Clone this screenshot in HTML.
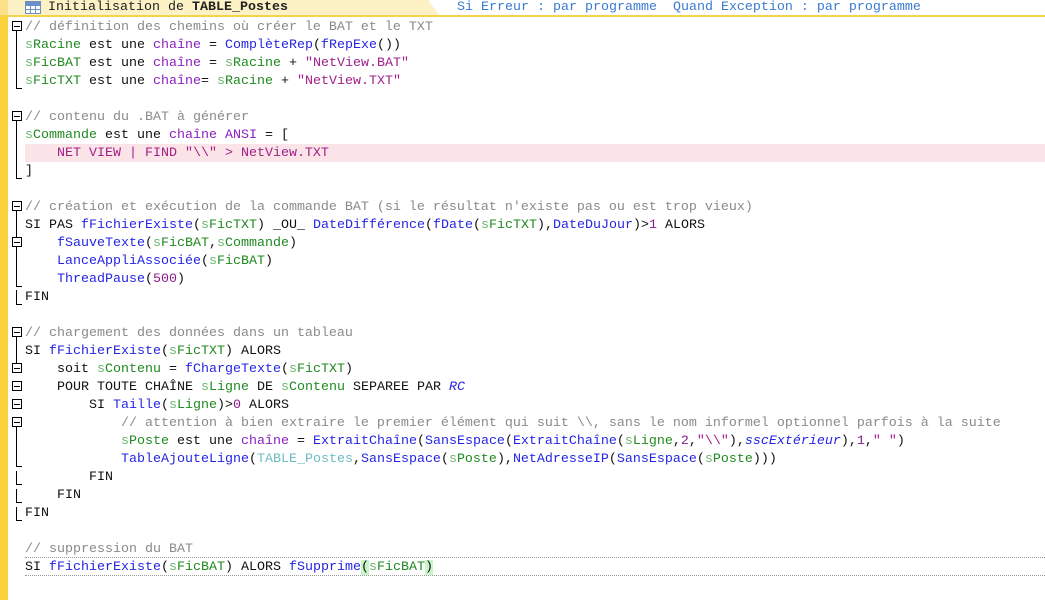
<!DOCTYPE html>
<html><head><meta charset="utf-8"><style>
body{margin:0;width:1045px;height:600px;overflow:hidden;background:#fff;position:relative;font-family:"Liberation Mono",monospace;font-size:13.33px}
#bar{position:absolute;left:0;top:0;width:8px;height:600px;background:#fcd23c}
#hdr{position:absolute;left:0;top:0}
.t{position:absolute;left:48px;top:0;height:16px;line-height:16px;color:#222;white-space:pre}
.e{position:absolute;left:457px;top:0;line-height:15px;color:#3a7ad0;white-space:pre}
#code{position:absolute;left:25px;top:19px}
.l{height:18px;line-height:18px;white-space:pre;color:#111}
.c{color:#8a8a8a}.v{color:#6fb46f}.w{color:#1f8a1f}.f{color:#2424e6}.k{color:#111}.ty{color:#8a1fc0}.s{color:#a0208a}.n{color:#8a1a8a}.i{color:#2424e6;font-style:italic}.tb{color:#6cbcc0}
.pink{position:absolute;left:25px;top:144px;width:1020px;height:18px;background:#fbe4e7}
.dot{position:absolute;left:25px;width:1020px;border-top:1px dotted #999}
.hl{background:#c8f5c8}
</style></head><body>
<div id="bar"></div>
<svg id="hdr" width="1045" height="17">
<polygon points="8,0 428,0 440,16 8,16" fill="#fdf1c6"/>
<rect x="0" y="0" width="8" height="16" fill="#fde08a"/>
<rect x="0" y="15" width="1045" height="2" fill="#f6d34c"/>
<g fill="#fff" stroke="#6b8fc9" stroke-width="1">
<rect x="25.5" y="1.5" width="15" height="12"/>
<line x1="25.5" y1="5.5" x2="40.5" y2="5.5"/><line x1="25.5" y1="9.5" x2="40.5" y2="9.5"/>
<line x1="30.5" y1="1.5" x2="30.5" y2="13.5"/><line x1="35.5" y1="1.5" x2="35.5" y2="13.5"/>
</g>
<rect x="25" y="1" width="16" height="4" fill="#6b8fc9"/>
</svg>
<div class="t">Initialisation de <b>TABLE_Postes</b></div>
<div class="e">Si Erreur : par programme  Quand Exception : par programme</div>
<div class="pink"></div>
<div class="dot" style="top:557px"></div>
<div class="dot" style="top:575px"></div>
<svg style="position:absolute;left:0;top:0" width="30" height="600" fill="none" stroke="#000" stroke-width="1">
<g fill="#fff">
<rect x="12.5" y="21.5" width="9" height="9"/>
<rect x="12.5" y="111.5" width="9" height="9"/>
<rect x="12.5" y="201.5" width="9" height="9"/>
<rect x="12.5" y="237.5" width="9" height="9"/>
<rect x="12.5" y="327.5" width="9" height="9"/>
<rect x="12.5" y="363.5" width="9" height="9"/>
<rect x="12.5" y="381.5" width="9" height="9"/>
<rect x="12.5" y="399.5" width="9" height="9"/>
<rect x="12.5" y="417.5" width="9" height="9"/>
</g>
<line x1="14" y1="26.5" x2="20" y2="26.5"/><line x1="14" y1="116.5" x2="20" y2="116.5"/>
<line x1="14" y1="206.5" x2="20" y2="206.5"/><line x1="14" y1="242.5" x2="20" y2="242.5"/>
<line x1="14" y1="332.5" x2="20" y2="332.5"/><line x1="14" y1="368.5" x2="20" y2="368.5"/>
<line x1="14" y1="386.5" x2="20" y2="386.5"/><line x1="14" y1="404.5" x2="20" y2="404.5"/>
<line x1="14" y1="422.5" x2="20" y2="422.5"/>
<polyline points="16.5,31 16.5,88.5 22,88.5"/>
<polyline points="16.5,121 16.5,178.5 22,178.5"/>
<line x1="16.5" y1="211" x2="16.5" y2="237"/>
<polyline points="16.5,247 16.5,286.5 22,286.5"/>
<polyline points="16.5,290 16.5,304.5 22,304.5"/>
<line x1="16.5" y1="337" x2="16.5" y2="363"/>
<polyline points="16.5,427 16.5,466.5 22,466.5"/>
<polyline points="16.5,471 16.5,484.5 22,484.5"/>
<polyline points="16.5,489 16.5,502.5 22,502.5"/>
<polyline points="16.5,507 16.5,520.5 22,520.5"/>
</svg>
<div id="code">
<div class="l c">// définition des chemins où créer le BAT et le TXT</div>
<div class="l"><span class="v">s</span><span class="w">Racine</span> est une <span class="ty">chaîne</span> = <span class="f">ComplèteRep</span>(<span class="f">fRepExe</span>())</div>
<div class="l"><span class="v">s</span><span class="w">FicBAT</span> est une <span class="ty">chaîne</span> = <span class="v">s</span><span class="w">Racine</span> + <span class="s">"NetView.BAT"</span></div>
<div class="l"><span class="v">s</span><span class="w">FicTXT</span> est une <span class="ty">chaîne</span>= <span class="v">s</span><span class="w">Racine</span> + <span class="s">"NetView.TXT"</span></div>
<div class="l"> </div>
<div class="l c">// contenu du .BAT à générer</div>
<div class="l"><span class="v">s</span><span class="w">Commande</span> est une <span class="ty">chaîne ANSI</span> = [</div>
<div class="l s">    NET VIEW | FIND "\\" &gt; NetView.TXT</div>
<div class="l">]</div>
<div class="l"> </div>
<div class="l c">// création et exécution de la commande BAT (si le résultat n'existe pas ou est trop vieux)</div>
<div class="l">SI PAS <span class="f">fFichierExiste</span>(<span class="v">s</span><span class="w">FicTXT</span>) _OU_ <span class="f">DateDifférence</span>(<span class="f">fDate</span>(<span class="v">s</span><span class="w">FicTXT</span>),<span class="f">DateDuJour</span>)&gt;<span class="n">1</span> ALORS</div>
<div class="l">    <span class="f">fSauveTexte</span>(<span class="v">s</span><span class="w">FicBAT</span>,<span class="v">s</span><span class="w">Commande</span>)</div>
<div class="l">    <span class="f">LanceAppliAssociée</span>(<span class="v">s</span><span class="w">FicBAT</span>)</div>
<div class="l">    <span class="f">ThreadPause</span>(<span class="n">500</span>)</div>
<div class="l">FIN</div>
<div class="l"> </div>
<div class="l c">// chargement des données dans un tableau</div>
<div class="l">SI <span class="f">fFichierExiste</span>(<span class="v">s</span><span class="w">FicTXT</span>) ALORS</div>
<div class="l">    soit <span class="v">s</span><span class="w">Contenu</span> = <span class="f">fChargeTexte</span>(<span class="v">s</span><span class="w">FicTXT</span>)</div>
<div class="l">    POUR TOUTE CHAÎNE <span class="v">s</span><span class="w">Ligne</span> DE <span class="v">s</span><span class="w">Contenu</span> SEPAREE PAR <span class="i">RC</span></div>
<div class="l">        SI <span class="f">Taille</span>(<span class="v">s</span><span class="w">Ligne</span>)&gt;<span class="n">0</span> ALORS</div>
<div class="l">            <span class="c">// attention à bien extraire le premier élément qui suit \\, sans le nom informel optionnel parfois à la suite</span></div>
<div class="l">            <span class="v">s</span><span class="w">Poste</span> est une <span class="ty">chaîne</span> = <span class="f">ExtraitChaîne</span>(<span class="f">SansEspace</span>(<span class="f">ExtraitChaîne</span>(<span class="v">s</span><span class="w">Ligne</span>,<span class="n">2</span>,<span class="s">"\\"</span>),<span class="i">sscExtérieur</span>),<span class="n">1</span>,<span class="s">" "</span>)</div>
<div class="l">            <span class="f">TableAjouteLigne</span>(<span class="tb">TABLE_Postes</span>,<span class="f">SansEspace</span>(<span class="v">s</span><span class="w">Poste</span>),<span class="f">NetAdresseIP</span>(<span class="f">SansEspace</span>(<span class="v">s</span><span class="w">Poste</span>)))</div>
<div class="l">        FIN</div>
<div class="l">    FIN</div>
<div class="l">FIN</div>
<div class="l"> </div>
<div class="l c">// suppression du BAT</div>
<div class="l">SI <span class="f">fFichierExiste</span>(<span class="v">s</span><span class="w">FicBAT</span>) ALORS <span class="f">fSupprime</span><span class="hl">(</span><span class="v">s</span><span class="w">FicBAT</span><span class="hl">)</span></div>
</div>
</body></html>
